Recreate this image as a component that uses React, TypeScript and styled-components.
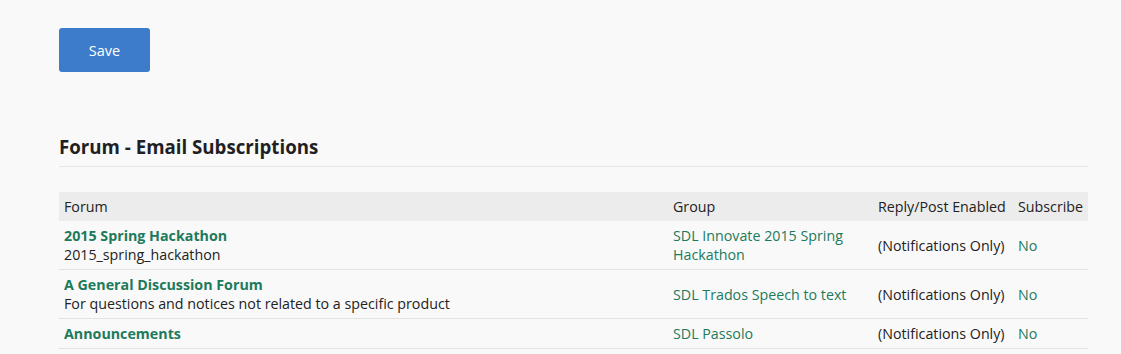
import React from "react";
import styled, { createGlobalStyle } from "styled-components";

const GlobalStyle = createGlobalStyle`
    html, body {
        margin: 0;
        padding: 0;
        background: #f9f9f9;
        font-family: "Open Sans", "Noto Sans", sans-serif;
        color: #222;
    }
`;

const Page = styled.div`
    padding: 28px 33px 0 59px;
`;

const SaveButton = styled.button`
    display: block;
    width: 91px;
    height: 44px;
    border: none;
    border-radius: 3px;
    background: #3d7ccb;
    color: #fff;
    font-family: inherit;
    font-size: 14.5px;
    cursor: pointer;
`;

const Title = styled.h2`
    margin: 62px 0 0;
    padding-bottom: 6px;
    border-bottom: 1px solid #e6e6e6;
    font-size: 18.7px;
    line-height: 26px;
    font-weight: 700;
    color: #1f1f24;
`;

const Table = styled.table`
    width: 100%;
    margin-top: 25px;
    border-collapse: collapse;
    table-layout: fixed;
    font-size: 14.25px;
    line-height: 19px;
`;

const HeadCell = styled.th<{ $width: number }>`
    width: ${({ $width }) => $width}px;
    padding: 5px;
    background: #ececec;
    text-align: left;
    font-weight: 400;
    white-space: nowrap;
`;

const Row = styled.tr`
    border-bottom: 1px solid #e3e3e3;
`;

const Cell = styled.td<{ $green?: boolean }>`
    padding: 5px;
    vertical-align: middle;
    color: ${({ $green }) => ($green ? "#1d7a5c" : "#222")};
    white-space: ${({ $green }) => ($green ? "normal" : "nowrap")};
`;

const ForumName = styled.a`
    display: block;
    color: #1d7a5c;
    font-weight: 700;
    text-decoration: none;
`;

// content widths; 5px padding each side comes on top
const columns = [
    { label: "Forum", width: 599 },
    { label: "Group", width: 195 },
    { label: "Reply/Post Enabled", width: 130 },
    { label: "Subscribe", width: 65 },
];

const forums = [
    {
        name: "2015 Spring Hackathon",
        desc: "2015_spring_hackathon",
        group: "SDL Innovate 2015 Spring Hackathon",
    },
    {
        name: "A General Discussion Forum",
        desc: "For questions and notices not related to a specific product",
        group: "SDL Trados Speech to text",
    },
    {
        name: "Announcements",
        desc: "",
        group: "SDL Passolo",
    },
];

const App = () => {
    return (
        <Page>
            <GlobalStyle />
            <SaveButton>Save</SaveButton>
            <Title>Forum - Email Subscriptions</Title>
            <Table>
                <thead>
                    <tr>
                        {columns.map((col) => (
                            <HeadCell key={col.label} $width={col.width}>
                                {col.label}
                            </HeadCell>
                        ))}
                    </tr>
                </thead>
                <tbody>
                    {forums.map((f) => (
                        <Row key={f.name}>
                            <Cell>
                                <ForumName href="#">{f.name}</ForumName>
                                {f.desc && <div>{f.desc}</div>}
                            </Cell>
                            <Cell $green>{f.group}</Cell>
                            <Cell>(Notifications Only)</Cell>
                            <Cell $green>No</Cell>
                        </Row>
                    ))}
                </tbody>
            </Table>
        </Page>
    );
};

export default App;
